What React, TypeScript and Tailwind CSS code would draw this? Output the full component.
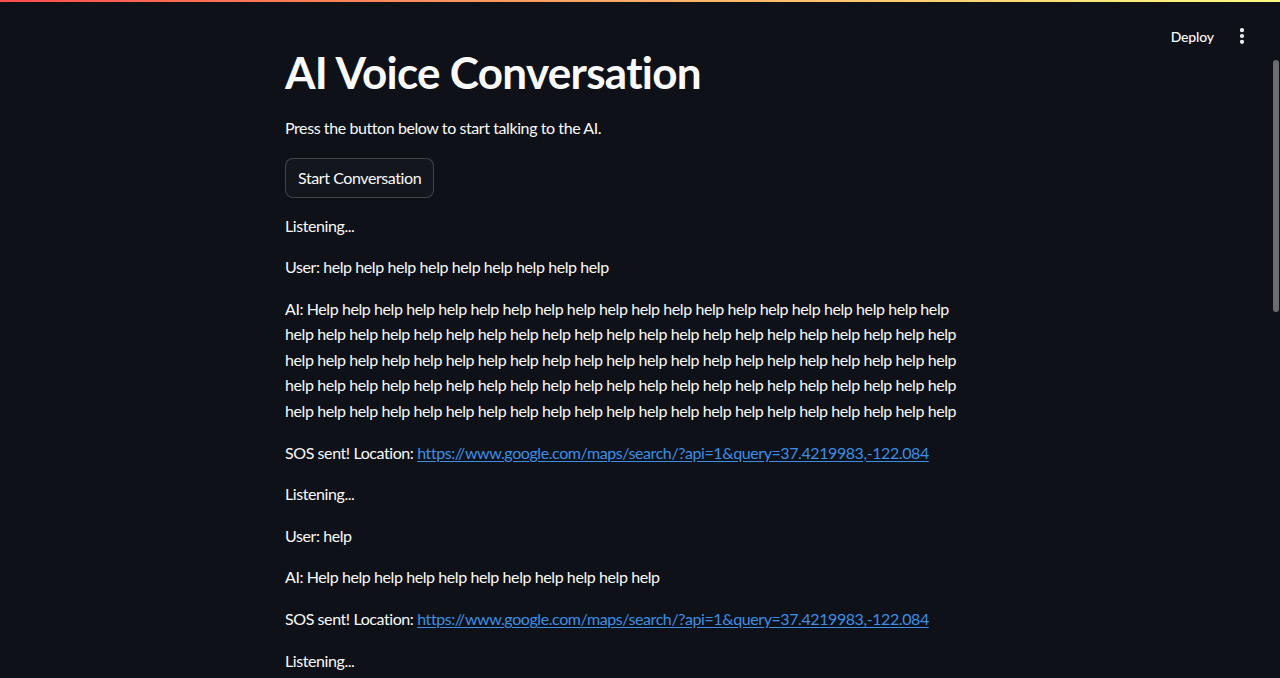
import { EllipsisVertical } from "lucide-react";

const FONT = "font-['Lato','Liberation_Sans',sans-serif]";

const Para = ({ children }: { children: React.ReactNode }) => (
  <p className="text-base leading-[1.6] tracking-[-0.026em] text-[#fafafa]">{children}</p>
);

const SosLine = () => (
  <Para>
    SOS sent! Location:{" "}
    <a
      href="#"
      className="text-[#3b8fe6] underline underline-offset-2"
    >
      https://www.google.com/maps/search/?api=1&amp;query=37.4219983,-122.084
    </a>
  </Para>
);

export default function App() {
  const longHelp = "AI: Help " + Array(103).fill("help").join(" ");

  return (
    <div className={`relative h-[678px] w-[1280px] overflow-hidden bg-[#0e1117] ${FONT}`}>
      {/* decoration line */}
      <div className="h-[2px] w-full bg-gradient-to-r from-[#ff4b4b] to-[#fffd80]" />

      {/* header */}
      <div className="flex h-[68px] items-center justify-end gap-[10px] pr-[28px]">
        <button className="px-2 py-1 text-[14px] font-medium tracking-[-0.01em] text-[#fafafa]">Deploy</button>
        <button className="text-[#fafafa]">
          <EllipsisVertical size={20} strokeWidth={3} />
        </button>
      </div>

      {/* main */}
      <div className="flex pr-[10px]">
        <div className="mx-auto flex w-[704px] flex-col gap-4 pl-[2px]">
          <h1 className="-mt-[24px] text-[44px] font-bold leading-[1.2] tracking-[-0.016em] text-[#fafafa]">
            AI Voice Conversation
          </h1>
          <Para>Press the button below to start talking to the AI.</Para>
          <div className="mt-[2px] -mb-[1px]">
            <button className="h-[40px] rounded-lg border border-[#fafafa33] bg-[#13161d] px-3 text-base tracking-[-0.026em] text-[#fafafa]">
              Start Conversation
            </button>
          </div>
          <Para>Listening...</Para>
          <div className="-mt-[1px]">
            <Para>User: help help help help help help help help help</Para>
          </div>
          <div className="w-[688px]">
            <Para>{longHelp}</Para>
          </div>
          <SosLine />
          <Para>Listening...</Para>
          <Para>User: help</Para>
          <Para>AI: Help help help help help help help help help help help</Para>
          <SosLine />
          <Para>Listening...</Para>
        </div>
      </div>

      {/* scrollbar */}
      <div className="absolute right-[1px] top-[60px] h-[252px] w-[6px] rounded-sm bg-[#6b6c70]" />
    </div>
  );
}
